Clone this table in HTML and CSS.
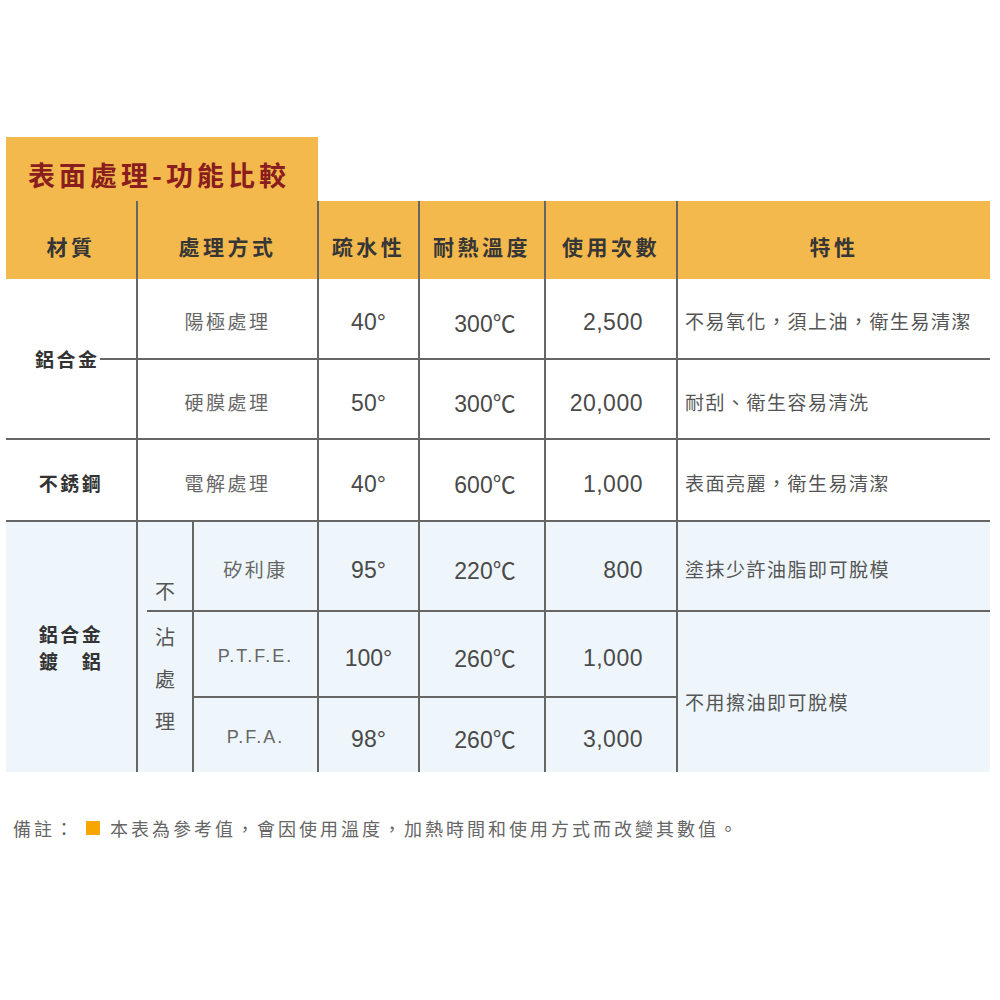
FILE: index.html
```html
<!DOCTYPE html>
<html lang="zh-TW">
<head>
<meta charset="utf-8">
<title>表面處理-功能比較</title>
<link rel="stylesheet" href="styles.css">
</head>
<body>
<div class="page">
  <div class="title">表面處理-功能比較</div>
  <div class="table">
    <div class="h vr">材質</div>
    <div class="h vr span2c">處理方式</div>
    <div class="h vr">疏水性</div>
    <div class="h vr">耐熱溫度</div>
    <div class="h vr">使用次數</div>
    <div class="h">特性</div>

    <div class="mat vr hb span2r split"><span>鋁合金</span><i class="seg"></i></div>
    <div class="proc vr hb span2c">陽極處理</div>
    <div class="deg vr hb">40°</div>
    <div class="temp vr hb">300℃</div>
    <div class="num vr hb">2,500</div>
    <div class="feat hb">不易氧化，須上油，衛生易清潔</div>

    <div class="proc vr hb span2c">硬膜處理</div>
    <div class="deg vr hb">50°</div>
    <div class="temp vr hb">300℃</div>
    <div class="num vr hb">20,000</div>
    <div class="feat hb">耐刮、衛生容易清洗</div>

    <div class="mat vr hb">不銹鋼</div>
    <div class="proc vr hb span2c">電解處理</div>
    <div class="deg vr hb">40°</div>
    <div class="temp vr hb">600℃</div>
    <div class="num vr hb">1,000</div>
    <div class="feat hb">表面亮麗，衛生易清潔</div>

    <div class="mat blue vr span3r two"><span>鋁合金</span><span>鍍　鋁</span></div>
    <div class="blue vr bu"><span>不</span><i class="partline"></i></div>
    <div class="proc blue vr hb">矽利康</div>
    <div class="deg blue vr hb">95°</div>
    <div class="temp blue vr hb">220℃</div>
    <div class="num blue vr hb">800</div>
    <div class="feat blue hb">塗抹少許油脂即可脫模</div>

    <div class="blue vr span2r zhan"><span>沾</span><span>處</span><span>理</span></div>
    <div class="latin blue vr hb">P.T.F.E.</div>
    <div class="deg blue vr hb">100°</div>
    <div class="temp blue vr hb">260℃</div>
    <div class="num blue vr hb">1,000</div>
    <div class="feat blue span2r low">不用擦油即可脫模</div>

    <div class="latin blue vr">P.F.A.</div>
    <div class="deg blue vr">98°</div>
    <div class="temp blue vr">260℃</div>
    <div class="num blue vr">3,000</div>
  </div>
  <div class="note">
    <span class="note-label">備註：</span><i class="sq"></i><span>本表為參考值，會因使用溫度，加熱時間和使用方式而改變其數值。</span>
  </div>
</div>
</body>
</html>
```

FILE: styles.css
```css
html, body {
  margin: 0;
  padding: 0;
  background: #ffffff;
}

.page {
  padding: 137px 0 0 6px;
  font-family: "Noto Sans CJK TC", "Noto Sans CJK SC", sans-serif;
  font-feature-settings: "locl" 1;
  color: #555;
}

.title {
  box-sizing: border-box;
  width: 312px;
  height: 64px;
  padding: 10px 0 0 22px;
  display: flex;
  align-items: center;
  background: #f4b94c;
  color: #8a1d1d;
  font-size: 27px;
  font-weight: 700;
  letter-spacing: 4px;
}

.table {
  display: grid;
  grid-template-columns: 132px 56px 125px 101px 126px 132px 312px;
  grid-template-rows: 78px 81px 80px 82px 90px 86px 74px;
  width: 984px;
}

.table > div {
  box-sizing: border-box;
  display: flex;
  align-items: center;
  justify-content: center;
  padding-top: 4px;
}

.span2c { grid-column: span 2; }
.span2r { grid-row: span 2; }
.span3r { grid-row: span 3; }

.vr { border-right: 2px solid #666; }
.hb { border-bottom: 2px solid #666; }

.h {
  background: #f4b94c;
  color: #363636;
  font-size: 21px;
  font-weight: 700;
  letter-spacing: 3.5px;
  padding-top: 12px !important;
}

.blue { background: #eef6fb; }

.mat {
  font-size: 19px;
  font-weight: 700;
  color: #333;
  letter-spacing: 2.5px;
}

.table > .split {
  justify-content: flex-start;
  padding: 0 0 0 29px;
}

.seg {
  flex: 1;
  height: 2px;
  background: #666;
}

.table > .two {
  flex-direction: column;
  line-height: 27px;
  padding: 0;
}

.proc {
  font-size: 19px;
  color: #666;
  letter-spacing: 2.5px;
}

.latin {
  font-family: "Liberation Sans", "Noto Sans CJK TC", sans-serif;
  font-size: 18px;
  color: #666;
  letter-spacing: 2px;
}

.deg, .temp, .num {
  font-family: "Liberation Sans", "Noto Sans CJK TC", sans-serif;
  font-size: 23px;
  color: #4a4a4a;
}

.table > .deg,
.table > .num { padding-top: 8px; }

.table > .temp { padding-left: 6px; padding-top: 6px; }

.table > .num {
  justify-content: flex-end;
  padding-right: 33px;
  letter-spacing: 0.5px;
}

.table > .feat {
  justify-content: flex-start;
  padding-left: 7px;
  font-size: 19px;
  color: #555;
  letter-spacing: 1.5px;
}

.table > .low { padding-top: 18px; }

.table > .bu {
  flex-direction: column;
  align-items: stretch;
  justify-content: flex-end;
  padding: 0;
  font-size: 20px;
  color: #555;
  text-align: center;
}

.bu span {
  line-height: 22px;
  margin-bottom: 8px;
}

.partline {
  display: block;
  height: 2px;
  margin-left: 9px;
  background: #666;
}

.table > .zhan {
  flex-direction: column;
  justify-content: flex-start;
  padding-top: 4px;
  font-size: 20px;
  color: #555;
}

.zhan span {
  line-height: 42px;
}

.note {
  margin-top: 46px;
  padding-left: 7px;
  display: flex;
  align-items: center;
  font-size: 18px;
  line-height: 20px;
  color: #666;
  letter-spacing: 3px;
}

.sq {
  width: 14px;
  height: 14px;
  background: #f7a600;
  margin: 0 10px;
}
```
